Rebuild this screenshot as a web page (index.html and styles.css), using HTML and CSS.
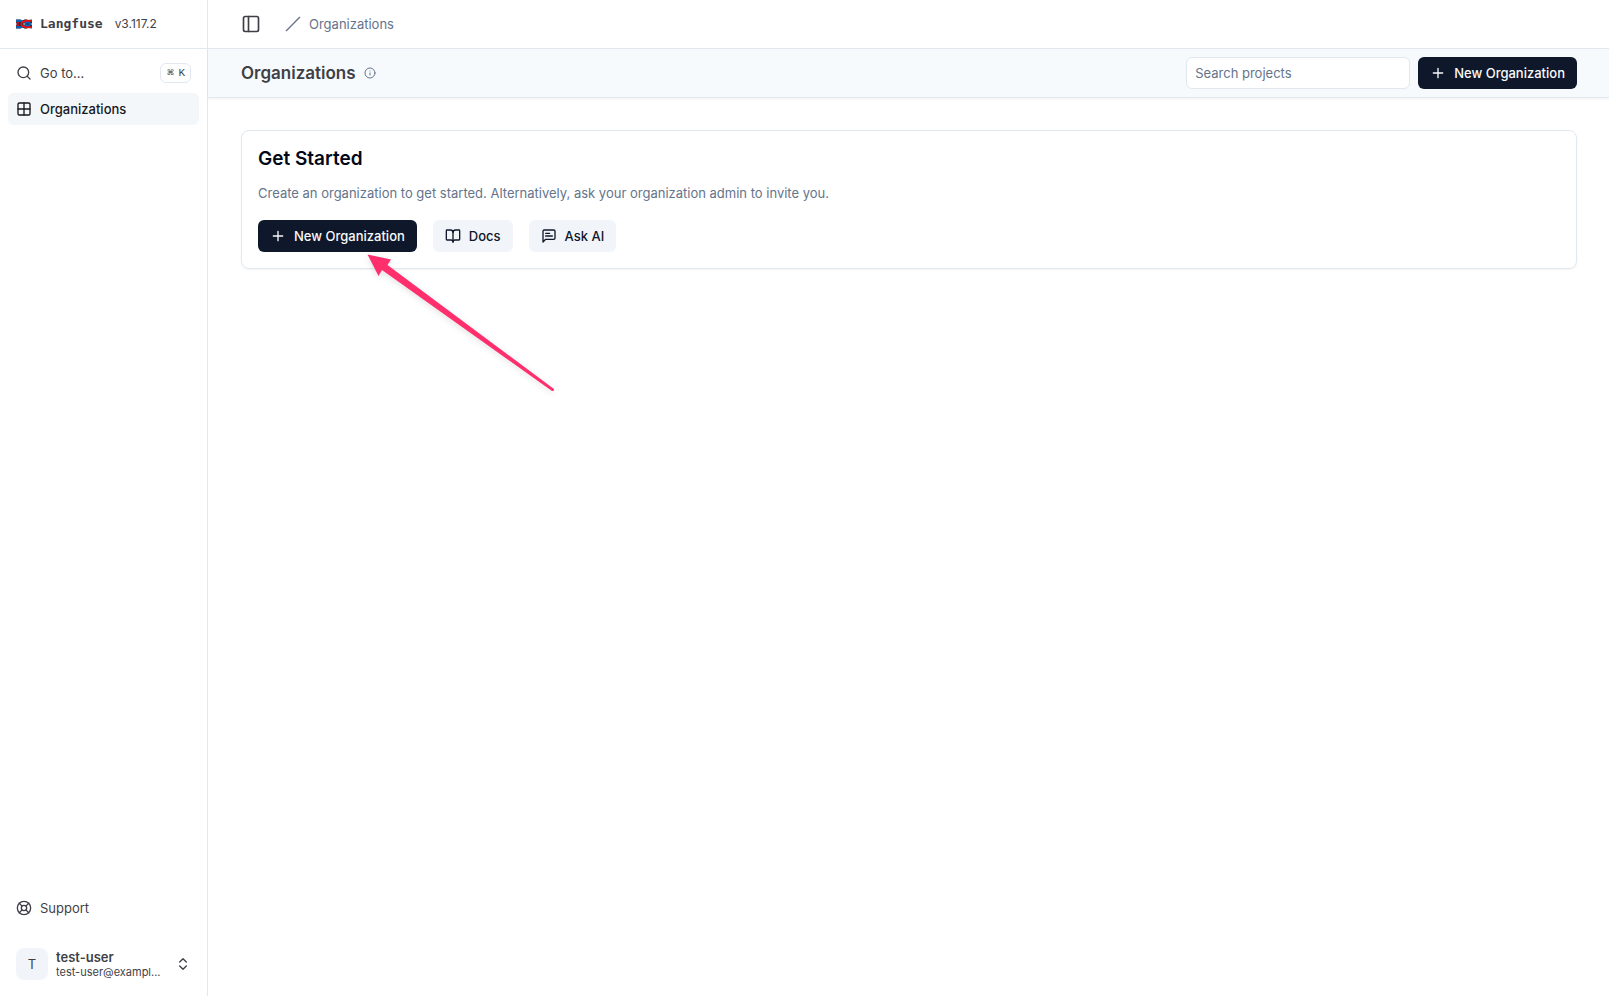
FILE: index.html
```html
<!DOCTYPE html>
<html lang="en">

<head>
    <meta charset="UTF-8">
    <meta name="viewport" content="width=device-width, initial-scale=1.0">
    <title>Organizations | Langfuse</title>
    <link rel="stylesheet" href="styles.css">
</head>

<body>
    <div class="app">
        <aside class="sidebar">
            <div class="brand">
                <svg class="logo" viewBox="0 0 16 10" width="16" height="10">
                    <path d="M0 .5h4.500l2 1L9 .3l3 .7 4-.5v3.500l-1 1 1 1V9.500l-4-.5-3 .7-2.500-1.200-2 1H0V6l1-1-1-1z" fill="#1c2c4c" />
                    <path d="M0 1.800h4.500L10 3.500h2.500a1.500 1.500 0 0 1 0 3H10L4.500 8.200H0" stroke="#0a66bd" stroke-width="1.900" fill="none" />
                    <path d="M16 1.900h-3.500L10.500 1.500 6.500 3a2.200 2.200 0 0 0 0 4l4 1.500 2-.4H16" stroke="#e51212" stroke-width="1.900" fill="none" />
                    <path d="M.5 3.600l2.500.4M.5 6.400 3 6" stroke="#e51212" stroke-width="1.500" />
                    <path d="M7.500 4.200 10 5 7.500 5.800z" fill="#fff" />
                </svg>
                <span class="brand-name">Langfuse</span>
                <span class="version">v3.117.2</span>
            </div>

            <nav class="menu">
                <button class="menu-item">
                    <svg class="icon" viewBox="0 0 24 24"><circle cx="11" cy="11" r="8" /><path d="m21 21-4.300-4.300" /></svg>
                    <span>Go to...</span>
                    <kbd class="kbd"><span class="cmd">⌘</span><span>K</span></kbd>
                </button>
                <a href="#" class="menu-item active">
                    <svg class="icon" viewBox="0 0 24 24"><rect x="3" y="3" width="18" height="18" rx="2" /><path d="M3 12h18M12 3v18" /></svg>
                    <span>Organizations</span>
                </a>
            </nav>

            <div class="menu">
                <button class="menu-item">
                    <svg class="icon" viewBox="0 0 24 24"><circle cx="12" cy="12" r="10" /><path d="m4.930 4.930 4.240 4.240M14.830 9.170l4.240-4.240M14.830 14.830l4.240 4.240M9.170 14.830l-4.240 4.240" /><circle cx="12" cy="12" r="4" /></svg>
                    <span>Support</span>
                </button>
            </div>

            <button class="user">
                <span class="avatar">T</span>
                <span class="user-info">
                    <span class="user-name">test-user</span>
                    <span class="user-mail">test-user@exampl...</span>
                </span>
                <svg class="icon" viewBox="0 0 24 24"><path d="m7 15 5 5 5-5M7 9l5-5 5 5" /></svg>
            </button>
        </aside>

        <main class="main">
            <div class="topbar">
                <button class="toggle" aria-label="Toggle sidebar">
                    <svg class="icon icon-lg" viewBox="0 0 24 24"><rect x="3" y="3" width="18" height="18" rx="2" /><path d="M9 3v18" /></svg>
                </button>
                <nav class="breadcrumb">
                    <svg class="icon" viewBox="0 0 24 24"><path d="M22 2 2 22" /></svg>
                    <a href="#">Organizations</a>
                </nav>
            </div>

            <header class="page-header">
                <h1>Organizations</h1>
                <svg class="icon icon-sm info" viewBox="0 0 24 24"><circle cx="12" cy="12" r="10" /><path d="M12 16v-4M12 8h.01" /></svg>
                <div class="actions">
                    <input type="search" class="search" placeholder="Search projects" aria-label="Search projects">
                    <button class="btn btn-dark">
                        <svg class="icon" viewBox="0 0 24 24"><path d="M5 12h14M12 5v14" /></svg>
                        New Organization
                    </button>
                </div>
            </header>

            <section class="card">
                <h2>Get Started</h2>
                <p>Create an organization to get started. Alternatively, ask your organization admin to invite you.</p>
                <div class="card-buttons">
                    <div class="pointer-anchor">
                        <button class="btn btn-dark">
                            <svg class="icon" viewBox="0 0 24 24"><path d="M5 12h14M12 5v14" /></svg>
                            New Organization
                        </button>
                        <svg class="arrow" viewBox="0 0 190 140" width="190" height="140">
                            <path d="M0.500.500 24 5.500 20.500 11 187 135 186.500 137 185 137 15 16 11.500 22z" fill="#ff2f6d" />
                        </svg>
                    </div>
                    <button class="btn btn-light">
                        <svg class="icon" viewBox="0 0 24 24"><path d="M12 7v14" /><path d="M3 18a1 1 0 0 1-1-1V4a1 1 0 0 1 1-1h5a4 4 0 0 1 4 4 4 4 0 0 1 4-4h5a1 1 0 0 1 1 1v13a1 1 0 0 1-1 1h-6a3 3 0 0 0-3 3 3 3 0 0 0-3-3z" /></svg>
                        Docs
                    </button>
                    <button class="btn btn-light">
                        <svg class="icon" viewBox="0 0 24 24"><path d="M21 15a2 2 0 0 1-2 2H7l-4 4V5a2 2 0 0 1 2-2h14a2 2 0 0 1 2 2zM13 8H7M17 12H7" /></svg>
                        Ask AI
                    </button>
                </div>
            </section>
        </main>
    </div>
</body>

</html>
```
FILE: styles.css
```css
* {
    box-sizing: border-box;
}

body {
    margin: 0;
    font-family: Inter, "Liberation Sans", sans-serif;
    font-size: 13px;
    line-height: 20px;
    color: #3f3f46;
    background-color: #fff;
}

button,
input {
    font: inherit;
    color: inherit;
}

button {
    border: none;
    background: none;
    padding: 0;
    cursor: pointer;
}

a {
    color: inherit;
    text-decoration: none;
}

.app {
    display: flex;
    min-height: 100vh;
}

.icon {
    width: 16px;
    height: 16px;
    flex-shrink: 0;
    fill: none;
    stroke: currentColor;
    stroke-width: 2;
    stroke-linecap: round;
    stroke-linejoin: round;
}

.icon-lg {
    width: 20px;
    height: 20px;
}

.icon-sm {
    width: 12px;
    height: 12px;
}

/* sidebar */
.sidebar {
    display: flex;
    flex-direction: column;
    width: 208px;
    flex-shrink: 0;
    border-right: 1px solid #e2e8f0;
}

.brand {
    display: flex;
    align-items: center;
    height: 49px;
    padding: 0 16px;
    border-bottom: 1px solid #e2e8f0;
}

.brand-name {
    margin: 0 12px 0 8px;
    font-family: "DejaVu Sans Mono", monospace;
    font-weight: bold;
}

.version {
    font-size: 12px;
}

.menu {
    display: flex;
    flex-direction: column;
    gap: 4px;
    padding: 8px;
}

nav.menu {
    flex: 1;
}

.menu-item {
    display: flex;
    align-items: center;
    gap: 8px;
    height: 32px;
    padding: 0 8px;
    border-radius: 6px;
    text-align: left;
}

.active {
    background-color: #f3f7fa;
    color: #18181b;
    font-weight: 500;
}

.kbd {
    display: flex;
    align-items: center;
    gap: 4px;
    height: 20px;
    margin-left: auto;
    padding: 0 5px;
    border: 1px solid #e2e8f0;
    border-radius: 6px;
    font-family: "Liberation Mono", monospace;
    font-size: 11px;
}

.cmd {
    font-family: "DejaVu Sans", sans-serif;
    font-size: 8px;
}

.user {
    display: flex;
    align-items: center;
    gap: 8px;
    height: 48px;
    margin: 8px;
    padding: 0 8px;
    text-align: left;
}

.avatar {
    display: flex;
    align-items: center;
    justify-content: center;
    width: 32px;
    height: 32px;
    border-radius: 8px;
    background-color: #f1f5f9;
}

.user-info {
    flex: 1;
    min-width: 0;
    padding-top: 2px;
    line-height: 15px;
    white-space: nowrap;
}

.user-name {
    display: block;
    font-weight: 600;
}

.user-mail {
    display: block;
    font-size: 11px;
}

/* main column */
.main {
    flex: 1;
    min-width: 0;
}

.topbar {
    display: flex;
    align-items: center;
    gap: 24px;
    height: 49px;
    padding: 0 32px 0 33px;
    border-bottom: 1px solid #e2e8f0;
}

.toggle {
    display: flex;
}

.breadcrumb {
    display: flex;
    align-items: center;
    gap: 8px;
    color: #64748b;
}

.page-header {
    display: flex;
    align-items: center;
    gap: 8px;
    height: 49px;
    padding: 0 32px 0 33px;
    border-bottom: 1px solid #e2e8f0;
    background-color: #f6fafd;
    box-shadow: 0 1px 2px rgba(0, 0, 0, 0.05);
}

h1 {
    margin: 0;
    font-size: 17px;
    font-weight: 600;
}

.info {
    color: #64748b;
}

.actions {
    display: flex;
    gap: 8px;
    margin-left: auto;
}

.search {
    width: 224px;
    height: 32px;
    padding: 0 8px;
    border: 1px solid #e2e8f0;
    border-radius: 6px;
    background-color: #fff;
}

.search::placeholder {
    color: #64748b;
}

.btn {
    display: flex;
    align-items: center;
    gap: 8px;
    height: 32px;
    padding: 0 12px;
    border-radius: 6px;
    font-weight: 500;
    white-space: nowrap;
}

.btn-dark {
    background-color: #0f172a;
    color: #f8fafc;
}

.btn-light {
    background-color: #f1f5f9;
    color: #0f172a;
}

.card {
    margin: 32px 32px 32px 33px;
    padding: 16px;
    border: 1px solid #e2e8f0;
    border-radius: 8px;
    box-shadow: 0 1px 2px rgba(0, 0, 0, 0.05);
}

h2 {
    margin: 0;
    font-size: 19px;
    line-height: 24px;
    font-weight: 600;
    color: #020817;
}

.card p {
    margin: 12px 0 17px;
    color: #64748b;
}

.card-buttons {
    display: flex;
    gap: 16px;
}

.pointer-anchor {
    position: relative;
}

/* arrow pointing at the button, lies over the card edge */
.arrow {
    position: absolute;
    top: 34px;
    left: 109px;
    filter: drop-shadow(0 2px 3px rgba(0, 0, 0, 0.12));
    overflow: visible;
    pointer-events: none;
}
```
